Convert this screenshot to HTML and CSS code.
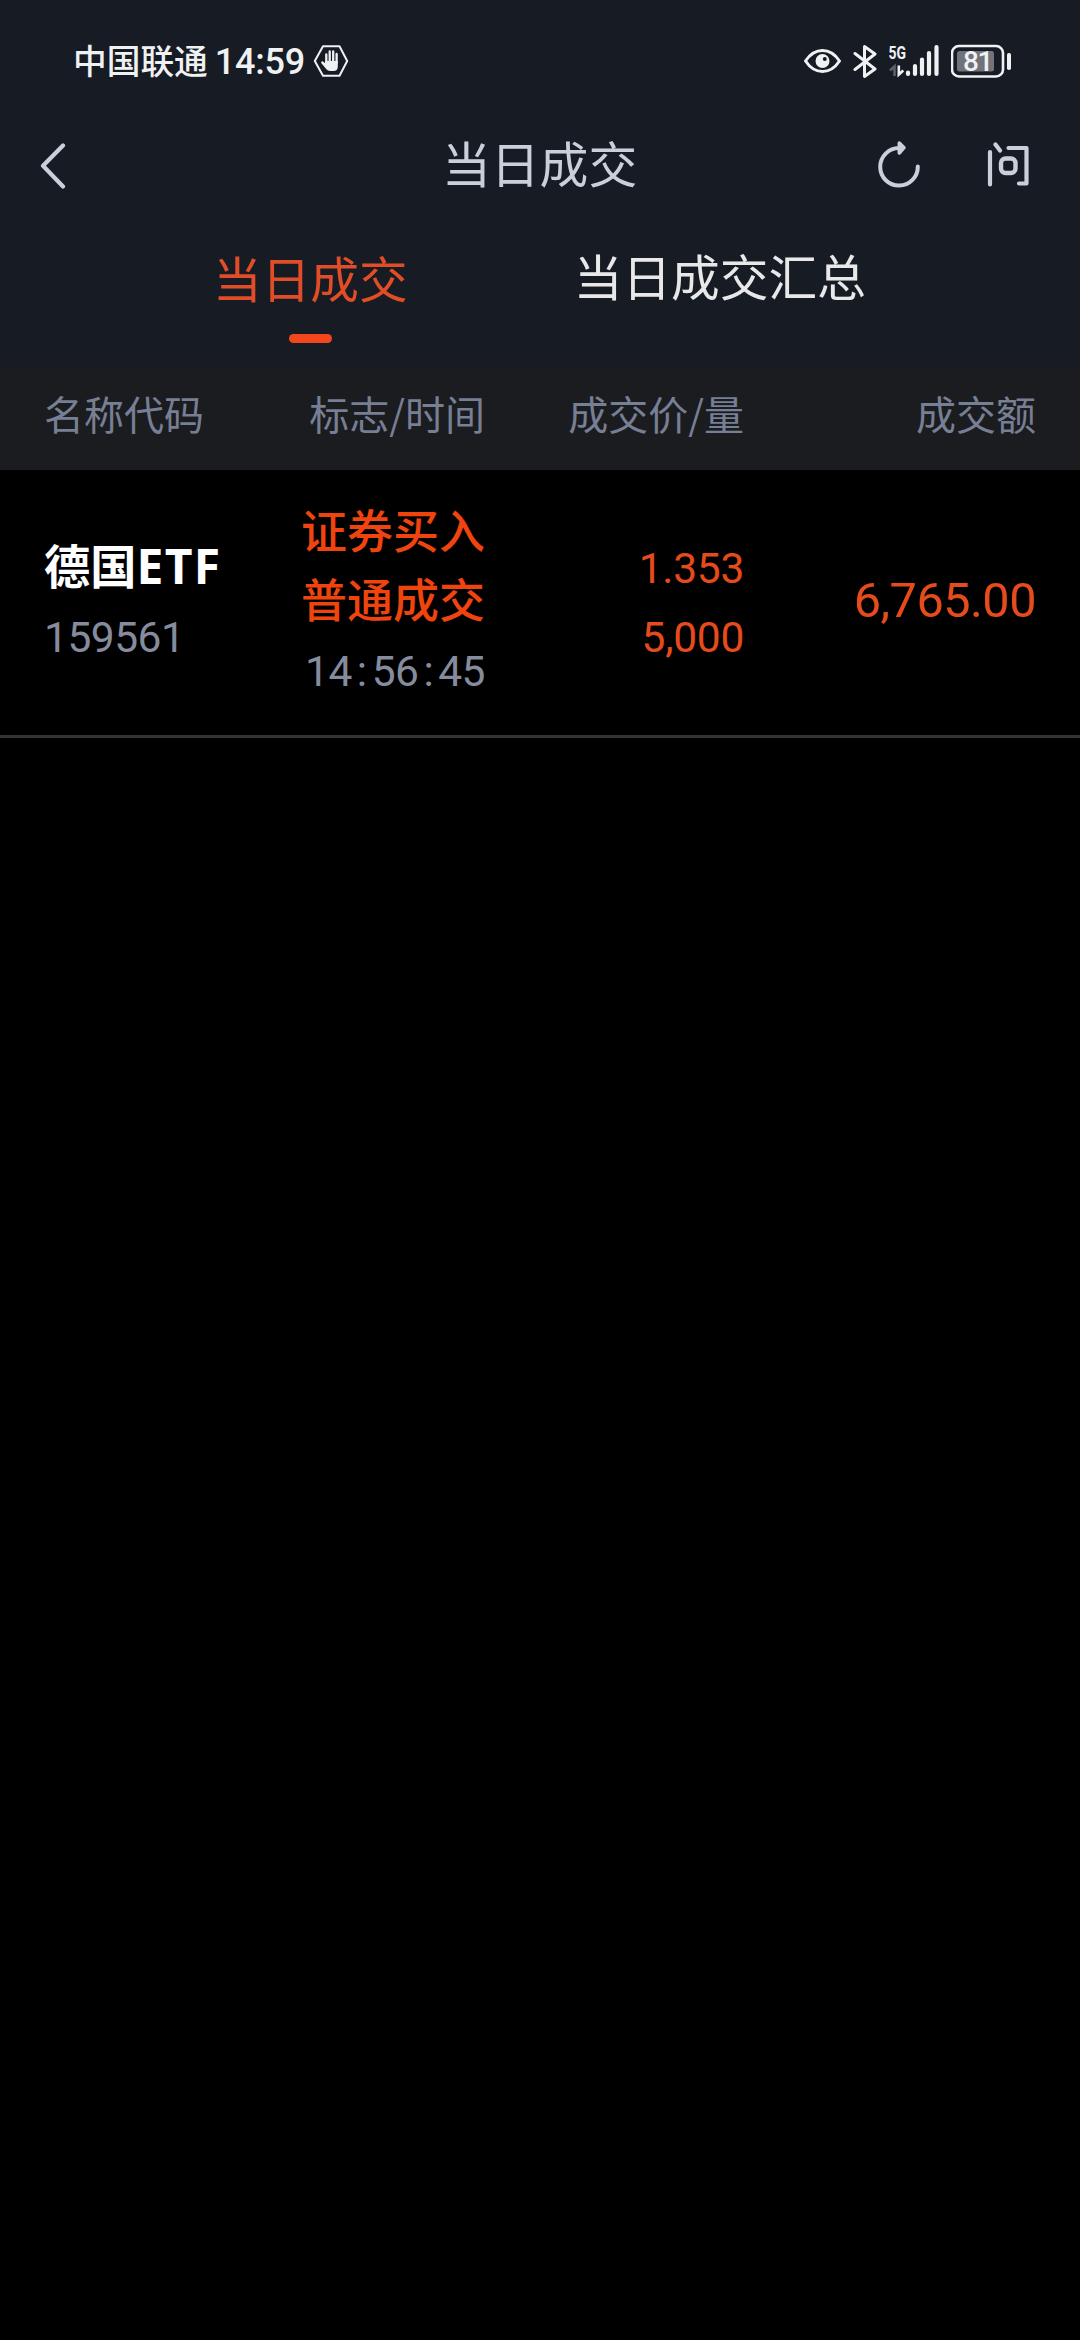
FILE: index.html
```html
<!DOCTYPE html>
<html lang="zh-CN">
<head>
<meta charset="utf-8">
<title>当日成交</title>
<link rel="stylesheet" href="styles.css">
</head>
<body>
<header class="top">
  <div class="status">
    <span class="carrier">中国联通</span>
    <span class="clock">14:59</span>
    <svg class="hex" width="36" height="34" viewBox="312 44 36 34">
      <path d="M322 46.2h16.500l7.700 14.800-7.700 14.800h-16.500l-8.200-14.800z" fill="none" stroke="#f0f1f3" stroke-width="2" stroke-linejoin="round"/>
      <path d="M325.300 63V54.500M328.700 62V51.500M332.200 62V51.500M335.600 63V54" stroke="#f0f1f3" stroke-width="2.300" stroke-linecap="round"/>
      <path d="M324.200 61h12.600v5.500q0 4.500-4.500 4.500h-3.300q-2.200 0-3.600-1.800l-5-6q-.8-1.500.6-1.900 1-.2 3.200 2z" fill="#f0f1f3"/>
    </svg>
    <div class="indicators">
      <svg width="38" height="28" viewBox="803 47 38 28">
        <path d="M804.500 61q7-10.500 17-10.500t17 10.500q-7 10.500-17 10.500t-17-10.500z" fill="none" stroke="#f0f1f3" stroke-width="3" stroke-linejoin="round"/>
        <circle cx="821.500" cy="61" r="7" fill="#f0f1f3"/>
        <circle cx="823.800" cy="59" r="2" fill="#171b24"/>
      </svg>
      <svg class="bluetooth" width="25" height="36" viewBox="852 43 25 36">
        <path d="M854 53.500l20 15.500-10.500 7.500v-30l10.500 7.500-20 15.500" fill="none" stroke="#f0f1f3" stroke-width="3" stroke-linejoin="round" stroke-linecap="round"/>
      </svg>
      <svg class="signal" width="52" height="36" viewBox="887 43 52 36">
        <text class="net" x="887.500" y="59.300" textLength="17.500" lengthAdjust="spacingAndGlyphs">5G</text>
        <path d="M893.500 76V66.500l-4.500 4" fill="none" stroke="#5d6068" stroke-width="2.600"/>
        <path d="M897.800 65.500V74.500l4.500-4" fill="none" stroke="#f0f1f3" stroke-width="2.600"/>
        <path d="M907 72.500v1.500M914 66v8M921 59.500v14.500M928 53v21M935.500 47v27" stroke="#f0f1f3" stroke-width="4.200" stroke-linecap="round"/>
      </svg>
      <svg class="battery" width="61" height="34" viewBox="950 44 61 34">
        <rect x="951" y="46" width="51" height="30.500" rx="7" fill="none" stroke="#f0f1f3" stroke-width="2.600"/>
        <rect x="956" y="51" width="37" height="20.500" rx="2.500" fill="#70737a"/>
        <text class="level" x="962" y="71">81</text>
        <rect x="1006" y="53" width="4" height="17" rx="1.800" fill="#f0f1f3"/>
      </svg>
    </div>
  </div>
  <nav class="nav">
    <svg class="back" width="28" height="48" viewBox="39 140 28 48">
      <path d="M63 144.500L43 164.700l20 20.800" fill="none" stroke="#cbcfda" stroke-width="4.200" stroke-linecap="round" stroke-linejoin="round"/>
    </svg>
    <h1 class="title">当日成交</h1>
    <svg class="refresh" width="44" height="50" viewBox="877 140 44 50">
      <path d="M900 148h-1a18.800 18.800 0 1 0 18.800 18.500" fill="none" stroke="#cbcfda" stroke-width="4" stroke-linecap="round"/>
      <path d="M899.300 143l4.700 4.700-4.700 5.300z" fill="#cbcfda" stroke="#cbcfda" stroke-width="3.500" stroke-linejoin="round"/>
    </svg>
    <svg class="ask" width="44" height="48" viewBox="987 141 44 48">
      <path d="M990 152v32.500M995.500 144.500l4.500 6M1008.500 148h18v35.500h-7.500" fill="none" stroke="#cbcfda" stroke-width="4.200" stroke-linecap="round" stroke-linejoin="round"/>
      <rect x="1001" y="158.500" width="14.500" height="14.500" rx="4.500" fill="none" stroke="#cbcfda" stroke-width="4.400"/>
    </svg>
  </nav>
  <div class="tabs">
    <div class="tab active">当日成交</div>
    <div class="tab">当日成交汇总</div>
  </div>
</header>
<main>
  <div class="row head">
    <span>名称代码</span><span>标志/时间</span><span>成交价/量</span><span>成交额</span>
  </div>
  <div class="row trade">
    <div class="cell">
      <div class="name">德国<span class="latin">ETF</span></div>
      <div class="num muted">159561</div>
    </div>
    <div class="cell">
      <div class="kind">证券买入</div>
      <div class="kind">普通成交</div>
      <div class="num muted">14<i class="colon">:</i>56<i class="colon">:</i>45</div>
    </div>
    <div class="cell">
      <div class="num">1.353</div>
      <div class="num">5,000</div>
    </div>
    <div class="cell">
      <div class="num amount">6,765.00</div>
    </div>
  </div>
</main>
</body>
</html>
```

FILE: styles.css
```css
* { box-sizing: border-box; }
body {
  margin: 0;
  width: 1080px;
  min-height: 2340px;
  background: #000;
  color: #f0f1f3;
  font-family: "Noto Sans CJK SC", sans-serif;
}
svg { display: block; flex: none; }
.top { height: 366px; background: #171b24; }

.status {
  display: flex;
  align-items: center;
  height: 122px;
  padding: 0 68px 0 73px;
}
.carrier { font-size: 33.7px; font-weight: 500; line-height: 40px; margin-top: -2px; }
.clock { font: 500 36px/40px Roboto, sans-serif; letter-spacing: -0.2px; margin: 2px 0 0 7px; }
.hex { margin-left: 8px; }
.indicators { display: flex; align-items: center; margin-left: auto; }
.bluetooth { margin-left: 11px; }
.signal { margin-left: 10px; }
.battery { margin-left: 11px; }
.net { font: 700 18px Roboto, sans-serif; fill: #f0f1f3; }
.level { font: 500 28px Roboto, sans-serif; letter-spacing: -1.5px; fill: #f0f1f3; }

.nav {
  display: flex;
  align-items: center;
  height: 85px;
  padding: 0 49px 0 39px;
  color: #cbcfda;
}
.title {
  margin: -5px 0 0 375px;
  font-size: 48.8px;
  font-weight: 400;
  line-height: 60px;
}
.refresh { margin-left: auto; }
.ask { margin-left: 66px; }

.tabs { display: flex; height: 159px; padding-left: 213px; gap: 166px; }
.tab {
  height: 136px;
  padding-top: 35px;
  font-size: 48.7px;
  line-height: 66px;
  color: #e8e8e9;
}
.tab.active {
  display: flex;
  flex-direction: column;
  align-items: center;
  justify-content: space-between;
  padding-top: 37px;
  color: #e04d27;
}
.tab.active::after {
  content: "";
  width: 43px;
  height: 9px;
  border-radius: 5px;
  background: #f2471d;
}

.row {
  display: grid;
  grid-template-columns: 180px 261px 259px 292px;
  padding: 0 44px;
  text-align: right;
}
.row > :first-child { text-align: left; }
.head {
  height: 104px;
  background: #1b1c20;
  color: #777f94;
  font-size: 40px;
  line-height: 94px;
}
.trade { height: 268px; border-bottom: 3px solid #333337; color: #e54b1b; }
.cell { display: flex; flex-direction: column; justify-content: center; line-height: 69px; }
.name { color: #fff; font-size: 46.2px; font-weight: 700; line-height: 69px; height: 69px; white-space: nowrap; }
.latin { font-family: "Open Sans", sans-serif; font-size: 48px; line-height: 1; letter-spacing: 1.4px; }
.kind { font-size: 46px; font-weight: 500; color: #f0440f; }
.num { font-family: Roboto, sans-serif; font-size: 42.5px; letter-spacing: -0.3px; }
.muted { color: #858c9d; line-height: 79px; letter-spacing: -0.5px; }
.colon { font-style: normal; margin: 0 5px; }
.amount { font-size: 48.6px; letter-spacing: -0.5px; padding-bottom: 4px; }
```
